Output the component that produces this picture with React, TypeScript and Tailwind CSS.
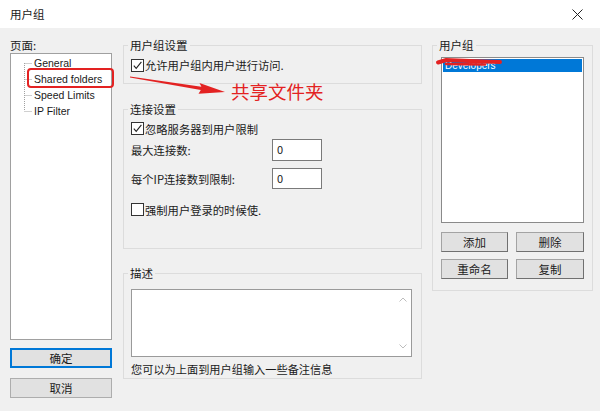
import React from "react";

function Check({ checked }: { checked: boolean }) {
  return (
    <span className="w-[13px] h-[13px] border border-[#333333] bg-white flex items-center justify-center shrink-0">
      {checked && (
        <svg width="11" height="11" viewBox="0 0 11 11">
          <path d="M1.8 5.6 L4.2 8.4 L9.4 1.8" fill="none" stroke="#222" strokeWidth="1.1" />
        </svg>
      )}
    </span>
  );
}

function TreeRow({ label, pos }: { label: string; pos: "first" | "mid" | "last" }) {
  const y1 = pos === "first" ? 8 : 0;
  const y2 = pos === "last" ? 8 : 16;
  return (
    <div className="flex items-center h-[16px]">
      <svg width="23" height="16" viewBox="0 0 23 16" className="shrink-0">
        <line x1="13.5" y1={y1} x2="13.5" y2={y2} stroke="#a0a0a0" strokeDasharray="1 1" />
        <line x1="13.5" y1="8.5" x2="21" y2="8.5" stroke="#a0a0a0" strokeDasharray="1 1" />
      </svg>
      <span className="text-[10.5px] leading-[16px] text-[#1a1a1a] font-['Liberation_Sans',sans-serif] whitespace-nowrap">
        {label}
      </span>
    </div>
  );
}

function Btn({ label, w }: { label: string; w: string }) {
  return (
    <div
      className={`${w} h-[20px] bg-[#e1e1e1] border border-[#a3a3a3] border-b-[#707070] border-r-[#707070] flex items-center justify-center text-[11.5px] leading-[14px] text-[#1a1a1a]`}
    >
      {label}
    </div>
  );
}

export default function App() {
  return (
    <div className="relative w-[600px] h-[411px] bg-[#f0f0f0] overflow-hidden font-['Noto_Sans_CJK_SC','Noto_Sans',sans-serif] text-[#1a1a1a]">
      {/* title bar */}
      <div className="h-[28px] bg-white flex items-center justify-between pl-[10px] pr-[17px]">
        <span className="text-[11.5px] leading-[14px]">用户组</span>
        <svg width="11" height="11" viewBox="0 0 11 11">
          <path d="M0.5 0.5 L10.5 10.5 M10.5 0.5 L0.5 10.5" stroke="#222" strokeWidth="1" />
        </svg>
      </div>

      <div className="flex pt-[10px] pl-[10px]">
        {/* left column */}
        <div className="w-[102px] flex flex-col">
          <div className="text-[11.5px] leading-[14px] h-[14px]">页面:</div>
          <div className="mt-[1px] h-[287px] bg-white border border-[#a0a0a0] pt-[1px]">
            <TreeRow label="General" pos="first" />
            <TreeRow label="Shared folders" pos="mid" />
            <TreeRow label="Speed Limits" pos="mid" />
            <TreeRow label="IP Filter" pos="last" />
          </div>
          <div className="mt-[8px] h-[20px] bg-[#e1e1e1] border-2 border-[#0078d7] flex items-center justify-center text-[11.5px] leading-[14px]">
            确定
          </div>
          <div className="mt-[10px] h-[20px] bg-[#e1e1e1] border border-[#adadad] flex items-center justify-center text-[11.5px] leading-[14px]">
            取消
          </div>
        </div>

        {/* middle column */}
        <div className="w-[299px] ml-[11px] flex flex-col">
          <fieldset className="border border-[#dcdcdc] h-[46px] p-0 m-0">
            <legend className="ml-[4px] px-[2px] text-[11.5px] leading-[14px]">用户组设置</legend>
            <div className="px-[7px] pt-[6px] flex items-center gap-[1px]">
              <Check checked />
              <span className="text-[11.3px] leading-[14px] whitespace-nowrap">允许用户组内用户进行访问.</span>
            </div>
          </fieldset>

          <fieldset className="mt-[18px] border border-[#dcdcdc] h-[147px] p-0 m-0">
            <legend className="ml-[4px] px-[2px] text-[11.5px] leading-[14px]">连接设置</legend>
            <div className="px-[7px] pt-[6px] flex flex-col">
              <div className="flex items-center gap-[1px] h-[13px]">
                <Check checked />
                <span className="text-[11.3px] leading-[14px] whitespace-nowrap">忽略服务器到用户限制</span>
              </div>
              <div className="mt-[4px] flex items-center h-[22px]">
                <span className="w-[141px] text-[11.3px] leading-[14px] whitespace-nowrap">最大连接数:</span>
                <div className="w-[50px] h-[22px] bg-white border border-[#7a7a7a] pl-[4px] pt-[2px] text-[11px] leading-[14px]">0</div>
              </div>
              <div className="mt-[7px] flex items-center h-[21px]">
                <span className="w-[141px] text-[11.3px] leading-[14px] whitespace-nowrap">每个IP连接数到限制:</span>
                <div className="w-[50px] h-[21px] bg-white border border-[#7a7a7a] pl-[4px] pt-[2px] text-[11px] leading-[14px]">0</div>
              </div>
              <div className="mt-[14px] flex items-center gap-[1px] h-[13px]">
                <Check checked={false} />
                <span className="text-[11.3px] leading-[14px] whitespace-nowrap">强制用户登录的时候使.</span>
              </div>
            </div>
          </fieldset>

          <fieldset className="mt-[17px] border border-[#dcdcdc] h-[113px] p-0 m-0">
            <legend className="ml-[4px] px-[2px] text-[11.5px] leading-[14px]">描述</legend>
            <div className="px-[7px] pt-[9px] flex flex-col">
              <div className="w-[281px] h-[68px] bg-white border border-[#9a9a9a] flex justify-end">
                <div className="w-[16px] flex flex-col items-center justify-between py-[7px]">
                  <svg width="8" height="5" viewBox="0 0 8 5">
                    <path d="M0.5 4.5 L4 1 L7.5 4.5" fill="none" stroke="#bdbdbd" strokeWidth="1" />
                  </svg>
                  <svg width="8" height="5" viewBox="0 0 8 5">
                    <path d="M0.5 0.5 L4 4 L7.5 0.5" fill="none" stroke="#bdbdbd" strokeWidth="1" />
                  </svg>
                </div>
              </div>
              <div className="mt-[5px] text-[11.2px] leading-[14px] whitespace-nowrap">您可以为上面到用户组输入一些备注信息</div>
            </div>
          </fieldset>
        </div>

        {/* right column */}
        <div className="w-[161px] ml-[10px]">
          <fieldset className="border border-[#dcdcdc] h-[253px] p-0 m-0">
            <legend className="ml-[4px] px-[2px] text-[11.5px] leading-[14px]">用户组</legend>
            <div className="px-[8px] pt-[5px] flex flex-col">
              <div className="w-[143px] h-[166px] bg-white border border-[#8a8a8a] p-[1px]">
                <div className="h-[13px] bg-[#0078d7] text-white text-[10px] leading-[13px] pl-[2px] font-['Liberation_Sans',sans-serif]">
                  Developers
                </div>
              </div>
              <div className="mt-[9px] flex gap-[8px]">
                <Btn label="添加" w="w-[67px]" />
                <Btn label="删除" w="w-[68px]" />
              </div>
              <div className="mt-[7px] flex gap-[8px]">
                <Btn label="重命名" w="w-[67px]" />
                <Btn label="复制" w="w-[68px]" />
              </div>
            </div>
          </fieldset>
        </div>
      </div>

      {/* annotations */}
      <div className="absolute left-[27px] top-[68px] w-[87px] h-[20px] border-2 border-[#e32222] rounded-[4px] pointer-events-none" />
      <svg className="absolute left-0 top-0 pointer-events-none" width="600" height="411" viewBox="0 0 600 411">
        <polygon
          points="130,76.6 201.4,86.8 199.5,83.0 225,92 198.5,93.8 200.8,90.0 130,77.6"
          fill="#e32222"
        />
        <path d="M438 62.5 L446 60 L470 61 L500 62" fill="none" stroke="#e32222" strokeWidth="4" strokeLinecap="round" />
        <path d="M446 64 L485 64.5" fill="none" stroke="#e32222" strokeWidth="2.5" strokeLinecap="round" />
      </svg>
      <div className="absolute left-[231px] top-[79px] text-[18.5px] leading-[24px] text-[#e32222] whitespace-nowrap pointer-events-none">
        共享文件夹
      </div>
    </div>
  );
}
